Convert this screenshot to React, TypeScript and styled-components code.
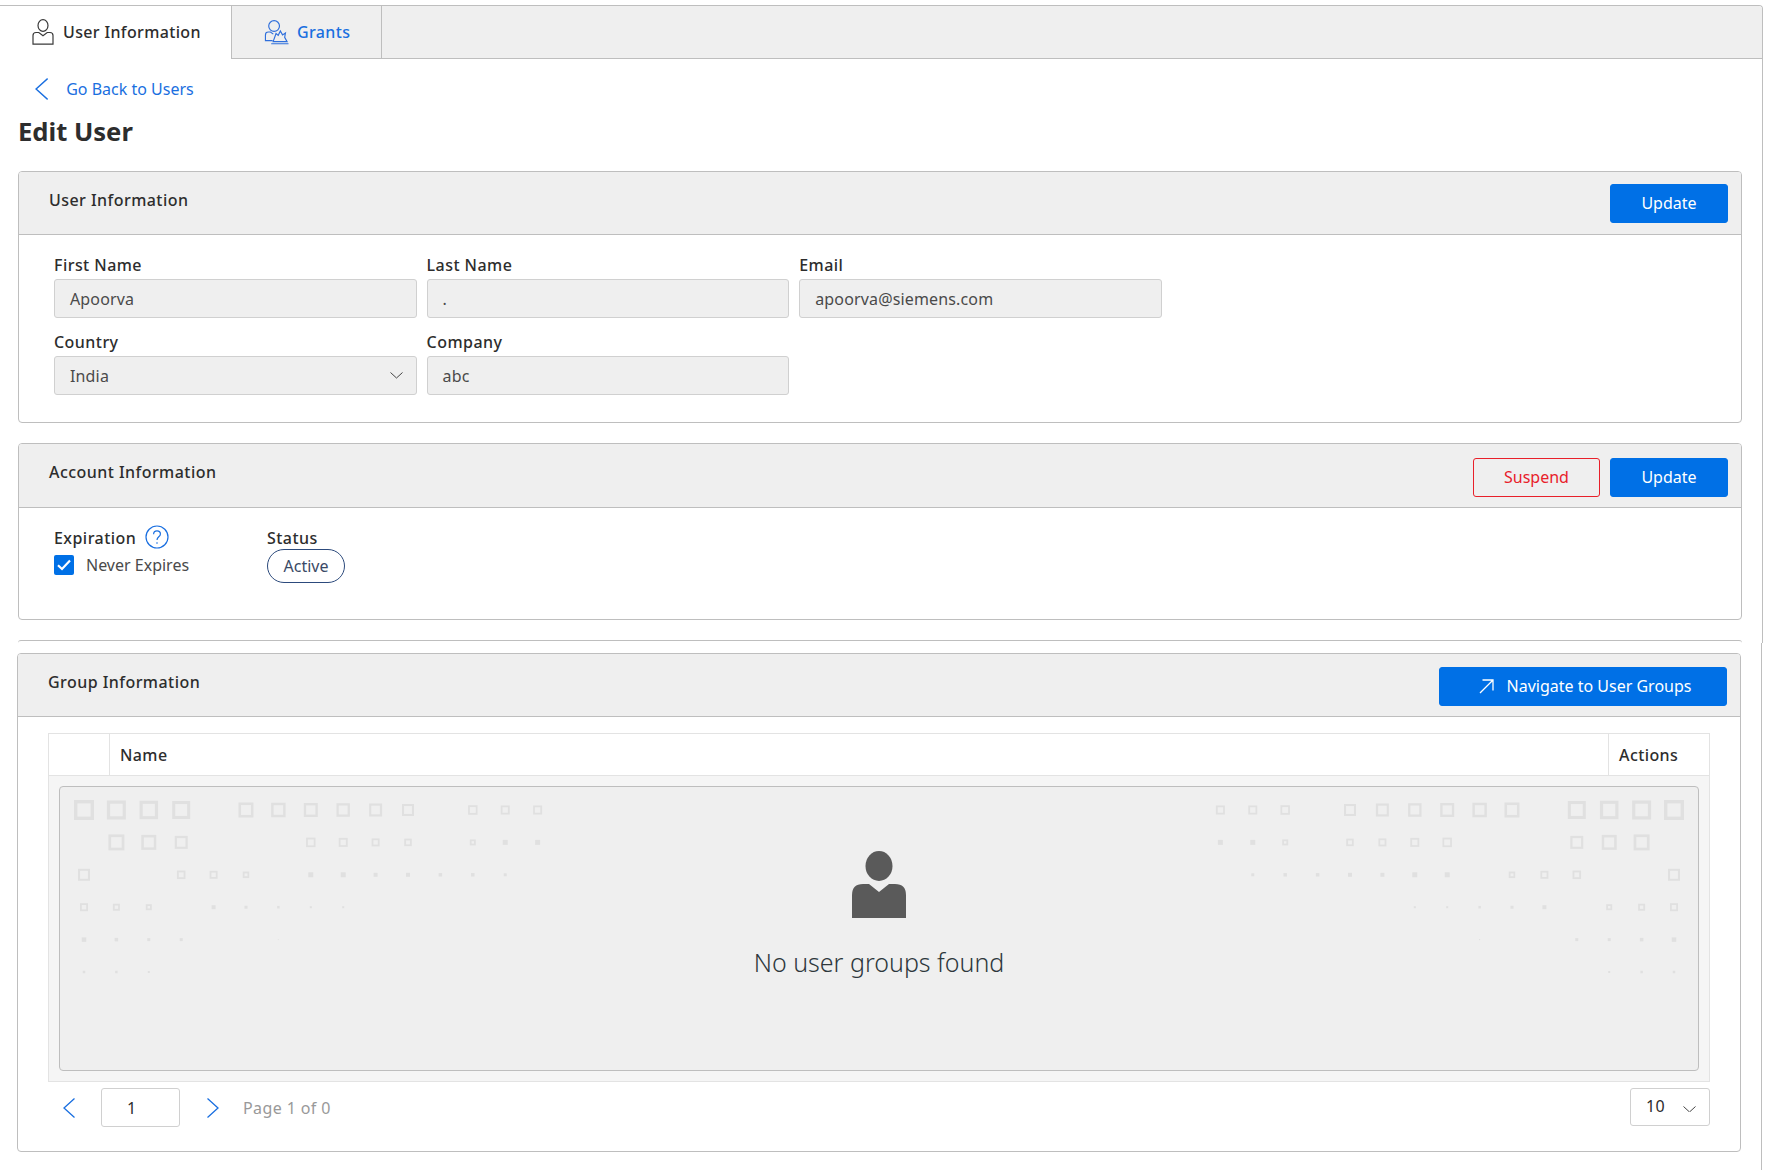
import React from "react";
import styled, { createGlobalStyle } from "styled-components";

const GlobalStyle = createGlobalStyle`
  html, body {
    margin: 0;
    padding: 0;
    background: #ffffff;
    font-family: "Noto Sans", "Open Sans", sans-serif;
    color: #2d2d2d;
  }
  * { box-sizing: border-box; }
`;

const Page = styled.div`
  width: 1778px;
  height: 1170px;
  overflow: hidden;
  padding-top: 5px;
`;
const TopFrame = styled.div`
  width: 1763px;
  height: 638px;
  border-top: 1px solid #bebebe;
  border-right: 1px solid #bebebe;
  border-top-right-radius: 4px;
  overflow: hidden;
`;
const BottomFrame = styled.div`
  width: 1762px;
  height: 527px;
  border-right: 1px solid #bebebe;
  padding: 10px 20px 0 17px;
`;
const TabBar = styled.div`
  display: flex;
  height: 53px;
  background: #efefef;
  border-bottom: 1px solid #bebebe;
`;
const Tab = styled.div<{ $active?: boolean; $width: number }>`
  display: flex;
  align-items: center;
  gap: ${(p) => (p.$active ? "9px" : "8px")};
  width: ${(p) => p.$width}px;
  height: ${(p) => (p.$active ? "53px" : "52px")};
  padding-left: 32px;
  padding-bottom: ${(p) => (p.$active ? "2px" : "0")};
  background: ${(p) => (p.$active ? "#ffffff" : "#efefef")};
  border-right: 1px solid #bebebe;
  color: ${(p) => (p.$active ? "#2d2d2d" : "#1a6fe0")};
  font-size: 16px;
  font-weight: 500;
  letter-spacing: 0.35px;
`;
const Content = styled.div`
  padding: 0 20px 0 18px;
`;
const BackRow = styled.div`
  display: flex;
  align-items: center;
  gap: 18px;
  height: 40px;
  margin-top: 10px;
  padding-left: 17px;
  color: #1a6fe0;
  font-size: 16px;
`;
const Title = styled.h1`
  margin: 0 0 16px;
  height: 46px;
  line-height: 46px;
  font-size: 25.6px;
  font-weight: 700;
  color: #2d2d2d;
`;
const Card = styled.section<{ $gap?: number }>`
  margin-top: ${(p) => p.$gap ?? 0}px;
  border: 1px solid #bebebe;
  border-radius: 4px;
  overflow: hidden;
`;
const CardHeader = styled.div<{ $tall?: boolean }>`
  display: flex;
  align-items: center;
  justify-content: space-between;
  height: ${(p) => (p.$tall ? 64 : 63)}px;
  padding: 0 13px 0 30px;
  background: #efefef;
  border-bottom: 1px solid #bebebe;
`;
const CardTitle = styled.h2`
  margin: 0 0 7px;
  font-size: 16px;
  font-weight: 500;
  letter-spacing: 0.45px;
  color: #2d2d2d;
`;
const Actions = styled.div<{ $nudge: number }>`
  display: flex;
  gap: 10px;
  margin-top: ${(p) => p.$nudge}px;
`;
const Button = styled.button<{ $width: number; $danger?: boolean; $inset?: number }>`
  display: flex;
  align-items: center;
  justify-content: center;
  gap: 13px;
  width: ${(p) => p.$width}px;
  height: 39px;
  padding: 0 0 0 ${(p) => p.$inset ?? 0}px;
  border: 1px solid ${(p) => (p.$danger ? "#e8202a" : "#0070e6")};
  border-radius: 3px;
  background: ${(p) => (p.$danger ? "transparent" : "#0070e6")};
  color: ${(p) => (p.$danger ? "#e8202a" : "#ffffff")};
  font-family: inherit;
  font-size: 16px;
`;
const FormGrid = styled.div`
  display: grid;
  grid-template-columns: repeat(3, 362.6px);
  column-gap: 10px;
  row-gap: 12px;
  padding: 18px 0 27px 35px;
`;
const Field = styled.div`
  display: flex;
  flex-direction: column;
  gap: 4px;
`;
const Label = styled.label`
  display: block;
  height: 22px;
  line-height: 24px;
  font-size: 16px;
  font-weight: 500;
  letter-spacing: 0.45px;
  color: #2d2d2d;
`;
const ReadOnly = styled.div`
  display: flex;
  align-items: center;
  justify-content: space-between;
  height: 39px;
  padding: 0 13px 0 15px;
  background: #efefef;
  border: 1px solid #d0d0d0;
  border-radius: 3px;
  font-size: 16px;
  letter-spacing: 0.15px;
  color: #4a4a4a;
`;
const AccountBody = styled.div`
  display: flex;
  height: 111px;
  padding: 18px 0 0 35px;
`;
const ExpirationCol = styled.div`
  width: 213px;
`;
const LabelRow = styled.div`
  display: flex;
  align-items: center;
  gap: 9px;
  height: 22px;
`;
const CheckRow = styled.div`
  display: flex;
  align-items: center;
  gap: 12px;
  margin-top: 5px;
`;
const CheckText = styled.span`
  padding-top: 1px;
  font-size: 16px;
  color: #4a4a4a;
`;
const CheckBox = styled.span`
  display: flex;
  align-items: center;
  justify-content: center;
  width: 20px;
  height: 20px;
  border-radius: 2px;
  background: #0070e6;
`;
const StatusPill = styled.span`
  display: inline-flex;
  align-items: center;
  justify-content: center;
  width: 78px;
  height: 34px;
  margin-top: 1px;
  border: 1px solid #2c4a7c;
  border-radius: 17px;
  font-size: 16px;
  color: #3a4a66;
`;
const CutEdge = styled.div`
  height: 3px;
  margin-top: 20px;
  border-top: 1px solid #bebebe;
  border-top-right-radius: 4px;
  border-top-left-radius: 4px;
`;
const GroupBody = styled.div`
  height: 434px;
  padding: 16px 30px 0 30px;
`;
const Table = styled.div`
  border: 1px solid #e3e3e3;
`;
const TableHead = styled.div`
  display: grid;
  grid-template-columns: 60px 1fr 101px;
  height: 42px;
  border-bottom: 1px solid #e3e3e3;
`;
const HeadCell = styled.div`
  display: flex;
  align-items: center;
  padding-left: 10px;
  font-size: 16px;
  font-weight: 500;
  letter-spacing: 0.4px;
  color: #2d2d2d;
  & + & {
    border-left: 1px solid #e3e3e3;
  }
`;
const TableBody = styled.div`
  height: 305px;
  padding: 10px;
  background: #f5f5f5;
`;
const EmptyBox = styled.div`
  position: relative;
  display: flex;
  flex-direction: column;
  align-items: center;
  height: 100%;
  padding-top: 64px;
  background: #efefef;
  border: 1px solid #bebebe;
  border-radius: 4px;
`;
const DotLayer = styled.svg`
  position: absolute;
  top: 0;
  left: 0;
`;
const EmptyText = styled.div`
  margin-top: 26px;
  line-height: 36px;
  font-size: 25px;
  font-weight: 300;
  color: #2d373c;
`;
const Pager = styled.div`
  display: flex;
  align-items: center;
  height: 39px;
  margin-top: 6px;
`;
const PageBtn = styled.span<{ $left: number; $right: number }>`
  display: flex;
  margin: 0 ${(p) => p.$right}px 0 ${(p) => p.$left}px;
`;
const PageInput = styled.div`
  display: flex;
  align-items: center;
  width: 79px;
  height: 39px;
  padding-left: 25px;
  border: 1px solid #d0d0d0;
  border-radius: 3px;
  font-size: 16px;
  color: #2d2d2d;
`;
const PageText = styled.span`
  font-size: 16px;
  letter-spacing: 0.4px;
  color: #999999;
`;
const PageSize = styled.div`
  display: flex;
  align-items: center;
  justify-content: space-between;
  width: 80px;
  height: 38px;
  margin-left: auto;
  margin-bottom: 1px;
  padding: 0 13px 2px 15px;
  border: 1px solid #d0d0d0;
  border-radius: 3px;
  font-size: 16px;
  letter-spacing: 0.3px;
  color: #2d2d2d;
`;
const CaretDrop = styled.span`
  display: flex;
  margin-top: 6px;
`;

const Chevron = ({ dir, color, h = 20 }: { dir: "left" | "right"; color: string; h?: number }) => (
  <svg width={h * 0.6} height={h} viewBox="0 0 12 20" fill="none" stroke={color} strokeWidth="1.3">
    <path d={dir === "left" ? "M11.5 .5 1 10l10.5 9.5" : "M.5 .5 11 10 .5 19.5"} />
  </svg>
);

const Caret = ({ w = 13 }: { w?: number }) => (
  <svg width={w} height={w / 2} viewBox="0 0 13 6.5" fill="none" stroke="#444" strokeWidth="1">
    <path d="M.5 .5 6.5 6l6-5.5" />
  </svg>
);

const UserOutline = () => (
  <svg width="22" height="26" viewBox="0 0 22 26" fill="none" stroke="#3a3a3a" strokeWidth="1.2">
    <ellipse cx="11" cy="6.5" rx="5" ry="5.8" />
    <path d="M1 25.2V16.5q0-3 3-3h2.8L11 16.8l4.2-3.3H18q3 0 3 3v8.7Z" />
  </svg>
);

const GrantsIcon = () => (
  <svg width="25" height="26" viewBox="0 0 26 26" fill="none" stroke="#2f6fdc" strokeWidth="1.2">
    <circle cx="10.5" cy="6.8" r="5.6" />
    <path d="M9 22H1.5v-6q0-3 3-3h2.2l3 2.2" />
    <path d="M9.5 23l3-8.5 2.3 2 2.2-4.5 2.3 4 3-2-.8 4.5L24 23Z" />
    <path d="M7.5 25.2h18" />
  </svg>
);

const QuestionIcon = () => (
  <svg width="24" height="24" viewBox="0 0 24 24" fill="none" stroke="#1a6fe0" strokeWidth="1.2">
    <circle cx="12" cy="12" r="11" />
    <path d="M8.6 9.2c0-2.2 1.5-3.4 3.4-3.4s3.4 1.2 3.4 3.1c0 2.8-3.4 2.9-3.4 6" />
    <path d="M12 17.2v1.6" />
  </svg>
);

const TickIcon = () => (
  <svg width="14" height="12" viewBox="0 0 14 12" fill="none" stroke="#fff" strokeWidth="2.2">
    <path d="M1 6.2 5 10 13 1.5" />
  </svg>
);

const ArrowUpRight = () => (
  <svg width="15" height="15" viewBox="0 0 15 15" fill="none" stroke="#fff" strokeWidth="1.3">
    <path d="M1 14 13.8 1.2M3.5 1h10.5v10.5" />
  </svg>
);

const PersonSolid = () => (
  <svg width="54" height="67" viewBox="0 0 54 67" fill="#5a5a5a">
    <ellipse cx="27" cy="15" rx="13.5" ry="15" />
    <path d="M0 67V44q0-11 11-11h6l10 8 10-8h6q11 0 11 11v23Z" />
  </svg>
);

// [row, column, outer size], mirrored to the right edge of the box
const DOTS: [number, number, number][] = [
  [0, 0, 20], [0, 1, 19], [0, 2, 18.5], [0, 3, 18],
  [0, 5, 15], [0, 6, 14.5], [0, 7, 14], [0, 8, 13.5], [0, 9, 13], [0, 10, 12],
  [0, 12, 9.5], [0, 13, 9], [0, 14, 9],
  [1, 1, 16], [1, 2, 15], [1, 3, 13],
  [1, 7, 9.5], [1, 8, 9], [1, 9, 8], [1, 10, 7.5],
  [1, 12, 6], [1, 13, 5], [1, 14, 5],
  [2, 0, 12], [2, 3, 8.5], [2, 4, 8], [2, 5, 6.5],
  [2, 7, 5], [2, 8, 5], [2, 9, 4], [2, 10, 4], [2, 11, 3.5], [2, 12, 3.5], [2, 13, 3],
  [3, 0, 8], [3, 1, 7], [3, 2, 6],
  [3, 4, 4], [3, 5, 3], [3, 6, 2.5], [3, 7, 2], [3, 8, 2],
  [4, 0, 4.5], [4, 1, 3.5], [4, 2, 3], [4, 3, 3], [4, 6, 1],
  [5, 0, 2.5], [5, 1, 2.5], [5, 2, 2],
];
const BOX_W = 1638;

const DotSquare = ({ cx, cy, s }: { cx: number; cy: number; s: number }) => {
  const hollow = s >= 5.5;
  const sw = hollow ? Math.max(1.8, s * 0.17) : s / 2;
  return (
    <rect
      x={cx - s / 2 + sw / 2}
      y={cy - s / 2 + sw / 2}
      width={s - sw}
      height={s - sw}
      fill={hollow ? "none" : "#e0e0e0"}
      stroke="#e0e0e0"
      strokeWidth={sw}
    />
  );
};

const DotPattern = () => (
  <DotLayer width={BOX_W} height="282" viewBox={`0 0 ${BOX_W} 282`}>
    {DOTS.map(([r, c, s]) => {
      const x = 24 + c * 32.4;
      const y = 23 + r * 32.4;
      return (
        <g key={`${r}-${c}`}>
          <DotSquare cx={x} cy={y} s={s} />
          <DotSquare cx={BOX_W - x} cy={y} s={s} />
        </g>
      );
    })}
  </DotLayer>
);

export default function App() {
  return (
    <Page>
      <GlobalStyle />
      <TopFrame>
        <TabBar>
          <Tab $active $width={232}>
            <UserOutline />
            User Information
          </Tab>
          <Tab $width={150}>
            <GrantsIcon />
            Grants
          </Tab>
        </TabBar>
        <Content>
          <BackRow>
            <Chevron dir="left" color="#1a6fe0" h={22} />
            Go Back to Users
          </BackRow>
          <Title>Edit User</Title>
          <Card>
            <CardHeader>
              <CardTitle>User Information</CardTitle>
              <Button $width={118}>Update</Button>
            </CardHeader>
            <FormGrid>
              <Field>
                <Label>First Name</Label>
                <ReadOnly>Apoorva</ReadOnly>
              </Field>
              <Field>
                <Label>Last Name</Label>
                <ReadOnly>.</ReadOnly>
              </Field>
              <Field>
                <Label>Email</Label>
                <ReadOnly>apoorva@siemens.com</ReadOnly>
              </Field>
              <Field>
                <Label>Country</Label>
                <ReadOnly>
                  India
                  <Caret />
                </ReadOnly>
              </Field>
              <Field>
                <Label>Company</Label>
                <ReadOnly>abc</ReadOnly>
              </Field>
            </FormGrid>
          </Card>
          <Card $gap={20}>
            <CardHeader $tall>
              <CardTitle>Account Information</CardTitle>
              <Actions $nudge={3}>
                <Button $width={127} $danger>
                  Suspend
                </Button>
                <Button $width={118}>Update</Button>
              </Actions>
            </CardHeader>
            <AccountBody>
              <ExpirationCol>
                <LabelRow>
                  <Label>Expiration</Label>
                  <QuestionIcon />
                </LabelRow>
                <CheckRow>
                  <CheckBox>
                    <TickIcon />
                  </CheckBox>
                  <CheckText>Never Expires</CheckText>
                </CheckRow>
              </ExpirationCol>
              <div>
                <Label>Status</Label>
                <StatusPill>Active</StatusPill>
              </div>
            </AccountBody>
          </Card>
          <CutEdge />
        </Content>
      </TopFrame>
      <BottomFrame>
        <Card>
          <CardHeader>
            <CardTitle>Group Information</CardTitle>
            <Actions $nudge={2}>
              <Button $width={288} $inset={4}>
                <ArrowUpRight />
                Navigate to User Groups
              </Button>
            </Actions>
          </CardHeader>
          <GroupBody>
            <Table>
              <TableHead>
                <HeadCell />
                <HeadCell>Name</HeadCell>
                <HeadCell>Actions</HeadCell>
              </TableHead>
              <TableBody>
                <EmptyBox>
                  <DotPattern />
                  <PersonSolid />
                  <EmptyText>No user groups found</EmptyText>
                </EmptyBox>
              </TableBody>
            </Table>
            <Pager>
              <PageBtn $left={15} $right={26}>
                <Chevron dir="left" color="#1a6fe0" />
              </PageBtn>
              <PageInput>1</PageInput>
              <PageBtn $left={27} $right={24}>
                <Chevron dir="right" color="#1a6fe0" />
              </PageBtn>
              <PageText>Page 1 of 0</PageText>
              <PageSize>
                10
                <CaretDrop>
                  <Caret />
                </CaretDrop>
              </PageSize>
            </Pager>
          </GroupBody>
        </Card>
      </BottomFrame>
    </Page>
  );
}
